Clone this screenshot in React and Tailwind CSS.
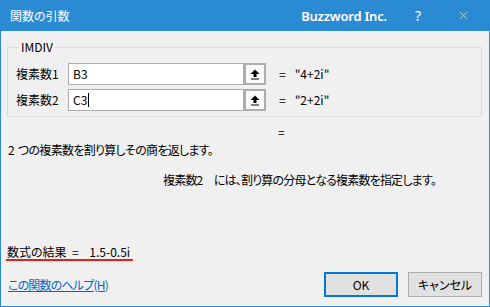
import { X } from "lucide-react"

function RefButton() {
    return (
        <div className="w-[22px] h-[22px] border-2 border-[#adadad] bg-[#fafafa] flex items-center justify-center">
            <svg width="10" height="11" viewBox="0 0 10 11">
                <path d="M5 0.5 L9.5 5 L6.5 5 L6.5 8 L3.5 8 L3.5 5 L0.5 5 Z" fill="#000" />
                <rect x="1" y="9.5" width="8" height="1" fill="#000" />
            </svg>
        </div>
    )
}

function ArgRow({label, value, result, caret}) {
    return (
        <div className="flex items-center h-[22px]">
            <span className="w-[52px]">{label}</span>
            <div className="w-[176px] h-[22px] border border-[#acacac] bg-white flex items-center pl-[4px]">
                <span>{value}</span>
                {caret ? <span className="w-[1px] h-[14px] bg-black ml-[1px]"></span> : ""}
            </div>
            <RefButton />
            <span className="ml-[13px]">=</span>
            <span className="ml-[9px] whitespace-pre">{result}</span>
        </div>
    )
}

export default function App() {
    return (
        <div className="w-[490px] h-[307px] flex flex-col bg-[#f0f0f0] border-x border-b border-[#2b8ad4] font-['Noto_Sans_CJK_JP',sans-serif] text-[12px] text-black [font-feature-settings:'palt'] leading-[16px]">
            <div className="h-[31px] shrink-0 bg-[#2b8ad4] flex items-center text-white pl-[9px] pr-[19px]">
                <span className="text-[12px]">関数の引数</span>
                <span className="ml-auto font-['Noto_Sans',sans-serif] font-semibold text-[13px] tracking-[-0.2px]">Buzzword Inc.</span>
                <span className="ml-[28px] font-['Noto_Sans',sans-serif] text-[14px]">?</span>
                <X className="ml-[36px] w-[13px] h-[13px]" strokeWidth={1.2} />
            </div>
            <div className="flex-1 flex flex-col pl-[6px] pr-[7px] pb-[9px]">
                <fieldset className="mt-[8px] border border-[#dcdcdc] pl-[8px] pb-[5px]">
                    <legend className="ml-[3px] px-[2px] leading-[16px]">IMDIV</legend>
                    <div className="flex flex-col gap-[4px] pt-[8px]">
                        <ArgRow label="複素数1" value="B3" result={'"4+2i"'} />
                        <ArgRow label="複素数2" value="C3" result={'"2+2i"'} caret />
                    </div>
                </fieldset>
                <div className="mt-[7px] pl-[271px]">=</div>
                <div className="mt-[2px] pl-[1px] tracking-[-0.7px] whitespace-pre">2  つの複素数を割り算しその商を返します。</div>
                <div className="mt-[14px] pl-[156px] whitespace-pre tracking-[-0.8px]">複素数2      には、割り算の分母となる複素数を指定します。</div>
                <div className="flex-1"></div>
                <div className="mb-[11px]">
                    <span className="inline-block pl-[1px] pr-[3px] -ml-[1px] leading-[15px] border-b-2 border-[#e0201b] whitespace-pre">数式の結果  =    1.5-0.5i</span>
                </div>
                <div className="flex items-center h-[25px]">
                    <a className="pl-[1px] text-[#0066cc] underline tracking-[-0.8px]">この関数のヘルプ(H)</a>
                    <div className="ml-auto flex gap-[10px]">
                        <button className="w-[74px] h-[25px] border-2 border-[#0078d7] bg-[#e1e1e1]">OK</button>
                        <button className="w-[74px] h-[25px] border border-[#adadad] bg-[#e1e1e1]">キャンセル</button>
                    </div>
                </div>
            </div>
        </div>
    )
}
